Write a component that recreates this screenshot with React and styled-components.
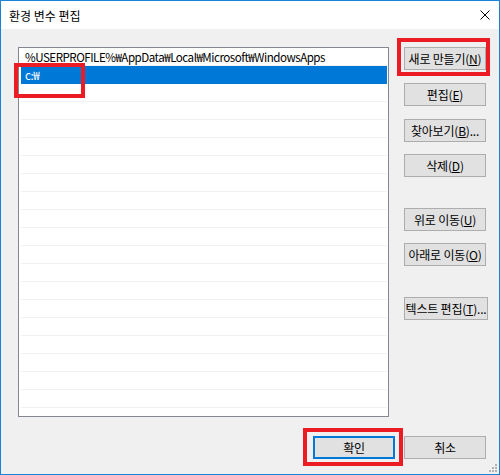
import React from "react";
import styled, { createGlobalStyle } from "styled-components";

const Global = createGlobalStyle`
  html, body { margin: 0; padding: 0; background: #ffffff; }
  * { box-sizing: border-box; }
  body { font-family: "Noto Sans CJK KR", "Noto Sans", sans-serif; }
`;

const Window = styled.div`
  position: relative;
  width: 500px;
  height: 475px;
  border: 1px solid #1883d7;
  background: #f0f0f0;
  display: flex;
  flex-direction: column;
  overflow: hidden;
`;

const TitleBar = styled.div`
  height: 28px;
  background: #ffffff;
  display: flex;
  align-items: center;
  justify-content: space-between;
  padding: 0 9px 0 8px;
  font-size: 12px;
  color: #000;
`;

const Title = styled.span`
  line-height: 1;
  margin-top: 1px;
`;

const CloseIcon = styled.svg`
  width: 10px;
  height: 10px;
`;

const Body = styled.div`
  flex: 1;
  display: flex;
  flex-direction: column;
  padding: 18px 12px 0 17px;
`;

const Main = styled.div`
  display: flex;
  gap: 15px;
  align-items: flex-start;
`;

const ListBox = styled.div`
  width: 371px;
  height: 370px;
  background: #ffffff;
  border: 1px solid #828790;
  padding: 0 1px 0 2px;
  display: flex;
  flex-direction: column;
`;

const Row = styled.div`
  height: 18px;
  flex: none;
  display: flex;
  align-items: center;
  padding-left: 4px;
  font-size: 11.6px;
  letter-spacing: -0.5px;
  color: ${(p) => (p.$selected ? "#ffffff" : "#000000")};
  background: ${(p) => (p.$selected ? "#0078d7" : "transparent")};
  border-bottom: 1px solid ${(p) => (p.$selected ? "#0078d7" : "#f2f2f2")};
  white-space: nowrap;
`;

const ButtonColumn = styled.div`
  display: flex;
  flex-direction: column;
  width: 82px;
`;

const Btn = styled.button`
  width: ${(p) => p.$w || 82}px;
  height: 23px;
  margin-top: ${(p) => p.$mt || 0}px;
  background: #e1e1e1;
  border: ${(p) => (p.$default ? "2px solid #0078d7" : "1px solid #adadad")};
  font-family: "Noto Sans CJK KR", "Noto Sans", sans-serif;
  font-size: 12px;
  color: #000;
  padding: 0;
  display: flex;
  align-items: center;
  justify-content: center;
  white-space: nowrap;
  letter-spacing: -0.2px;
  line-height: 1;
`;

const Key = styled.u`
  text-underline-offset: 1px;
`;

const Footer = styled.div`
  display: flex;
  justify-content: flex-end;
  gap: 9px;
  margin-top: 19px;
  padding-right: 1px;
`;

const Highlight = styled.div`
  position: absolute;
  border: 4px solid #ec1c24;
  pointer-events: none;
`;

const Grip = styled.svg`
  position: absolute;
  right: 2px;
  bottom: 2px;
  width: 10px;
  height: 10px;
`;

const rows = Array.from({ length: 20 });

export default function App() {
  return (
    <>
      <Global />
      <Window>
        <TitleBar>
          <Title>환경 변수 편집</Title>
          <CloseIcon viewBox="0 0 10 10">
            <path d="M0.5 0.5 L9.5 9.5 M9.5 0.5 L0.5 9.5" stroke="#000" strokeWidth="1" fill="none" />
          </CloseIcon>
        </TitleBar>
        <Body>
          <Main>
            <ListBox>
              {rows.map((_, i) => (
                <Row key={i} $selected={i === 1}>
                  {i === 0 ? "%USERPROFILE%₩AppData₩Local₩Microsoft₩WindowsApps" : i === 1 ? "c:₩" : ""}
                </Row>
              ))}
            </ListBox>
            <ButtonColumn>
              <Btn>새로 만들기(<Key>N</Key>)</Btn>
              <Btn $mt={13}>편집(<Key>E</Key>)</Btn>
              <Btn $mt={13}>찾아보기(<Key>B</Key>)...</Btn>
              <Btn $mt={12}>삭제(<Key>D</Key>)</Btn>
              <Btn $mt={31}>위로 이동(<Key>U</Key>)</Btn>
              <Btn $mt={12}>아래로 이동(<Key>O</Key>)</Btn>
              <Btn $mt={31} $w={84}>텍스트 편집(<Key>T</Key>)...</Btn>
            </ButtonColumn>
          </Main>
          <Footer>
            <Btn $default>확인</Btn>
            <Btn>취소</Btn>
          </Footer>
        </Body>
        <Highlight style={{ left: 13, top: 62, width: 71, height: 35 }} />
        <Highlight style={{ left: 396, top: 37, width: 93, height: 38 }} />
        <Highlight style={{ left: 302, top: 427, width: 100, height: 38 }} />
        <Grip viewBox="0 0 10 10">
          {[[8, 2], [8, 5], [5, 5], [8, 8], [5, 8], [2, 8]].map(([x, y], i) => (
            <rect key={i} x={x} y={y} width="2" height="2" fill="#b4b4b4" />
          ))}
        </Grip>
      </Window>
    </>
  );
}
